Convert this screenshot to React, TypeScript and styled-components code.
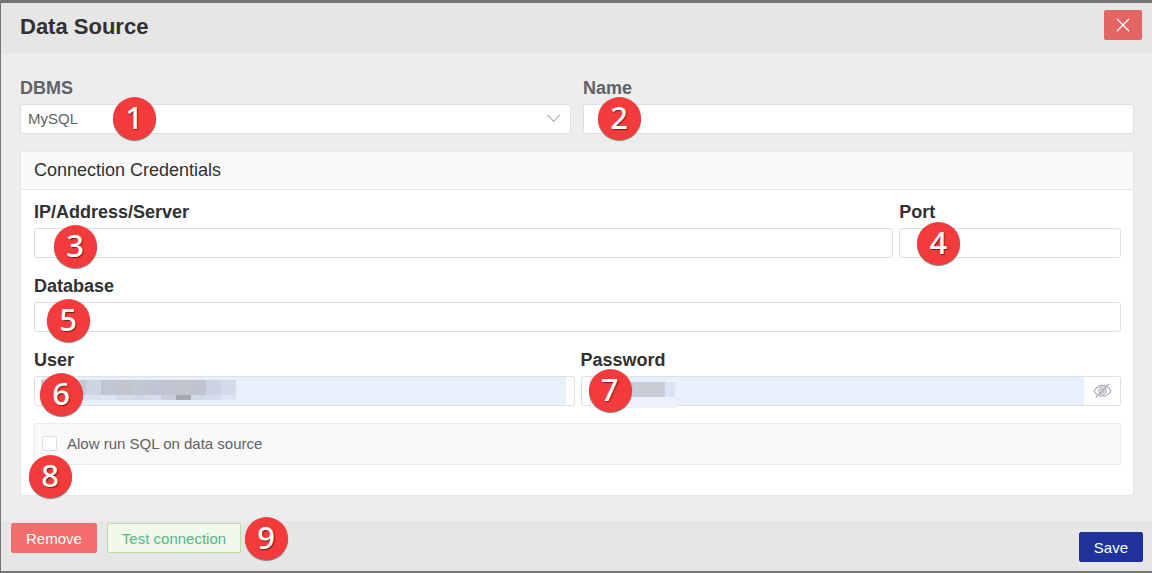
import React from 'react';
import styled, { createGlobalStyle } from 'styled-components';

const GlobalStyle = createGlobalStyle`
  *, *::before, *::after { box-sizing: border-box; }
  body {
    margin: 0;
    background: #ededed;
    color: #303133;
    font-family: "Liberation Sans", Arial, sans-serif;
    font-size: 15px;
  }
  button, input, select { font: inherit; }
`;

const Dialog = styled.form`
  display: flex;
  flex-direction: column;
  min-height: 100vh;
  border: solid #757575;
  border-width: 3px 0 2px 1px;
  background: #ededed;
`;

const Header = styled.header`
  display: flex;
  justify-content: space-between;
  align-items: flex-start;
  height: 50px;
  padding: 7px 10px 0 19px;
  background: #e6e6e6;
`;

const Title = styled.h1`
  margin: 0;
  font-size: 22px;
  line-height: 34px;
`;

const CloseButton = styled.button`
  display: flex;
  align-items: center;
  justify-content: center;
  width: 38px;
  height: 30px;
  padding: 0;
  border: 0;
  border-radius: 2px;
  background: #e46464;
`;

const Body = styled.main`
  flex: 1;
  padding: 23px 18px 25px 19px;
`;

const Row = styled.div<{ $columns?: string; $gap?: number }>`
  display: grid;
  grid-template-columns: ${(p) => p.$columns ?? '1fr'};
  column-gap: ${(p) => p.$gap ?? 6}px;
`;

const Field = styled.div`
  position: relative;
  display: flex;
  flex-direction: column;
  gap: 4px;
  min-width: 0;
`;

const Label = styled.label<{ $muted?: boolean }>`
  font-size: 18px;
  font-weight: bold;
  line-height: 24px;
  color: ${(p) => (p.$muted ? '#606266' : '#303133')};
`;

const Control = styled.div`
  position: relative;
  display: flex;
  align-items: center;
  height: 30px;
  padding: 0 8px 0 7px;
  border: 1px solid #dcdfe6;
  border-radius: 3px;
  background: #fff;
`;

const TextInput = styled.input<{ $filled?: boolean }>`
  flex: 1;
  min-width: 0;
  height: 28px;
  padding: 0;
  border: 0;
  outline: 0;
  color: #606266;
  background: ${(p) => (p.$filled ? '#e8f0fe' : 'transparent')};
`;

const Select = styled.select`
  flex: 1;
  height: 28px;
  padding: 0 0 2px;
  border: 0;
  outline: 0;
  appearance: none;
  color: #606266;
  background: transparent;
`;

const EyeButton = styled.button`
  display: flex;
  align-items: center;
  justify-content: center;
  width: 36px;
  height: 28px;
  margin-right: -8px;
  padding: 0;
  border: 0;
  background: transparent;
`;

const Card = styled.section`
  margin-top: 17px;
  border: 1px solid #e4e7ed;
  border-radius: 4px;
  background: #fff;
`;

const CardTitle = styled.h2`
  margin: 0;
  padding: 0 13px;
  border-bottom: 1px solid #e4e7ed;
  border-radius: 3px 3px 0 0;
  background: #fafafa;
  font-size: 18px;
  font-weight: normal;
  line-height: 37px;
`;

const CardBody = styled.div`
  padding: 10px 12px 30px 13px;
`;

const Fields = styled.div`
  display: grid;
  gap: 16px;
`;

const Option = styled.div`
  position: relative;
  display: flex;
  align-items: center;
  gap: 10px;
  height: 42px;
  margin-top: 17px;
  padding: 0 7px 1px;
  border: 1px solid #ebebeb;
  background: #f9f9f9;
  color: #606266;
`;

const Checkbox = styled.input`
  width: 15px;
  height: 15px;
  margin: 0;
  appearance: none;
  border: 1px solid #dcdfe6;
  border-radius: 2px;
  background: #fff;
`;

const Footer = styled.footer`
  display: flex;
  justify-content: space-between;
  height: 50px;
  padding: 2px 9px 9px 10px;
  background: #e6e6e6;
`;

const Actions = styled.div`
  position: relative;
  display: flex;
  align-items: flex-start;
  gap: 10px;
`;

const tones = {
  danger: { bg: '#f56c6c', border: '#f56c6c', text: '#fff' },
  success: { bg: '#f0f9eb', border: '#b3e19d', text: '#5bb58c' },
  primary: { bg: '#20339c', border: '#20339c', text: '#fff' },
};

const Button = styled.button<{ $tone: keyof typeof tones }>`
  height: 30px;
  padding: 2px 14px 0;
  border: 1px solid ${(p) => tones[p.$tone].border};
  border-radius: 2px;
  background: ${(p) => tones[p.$tone].bg};
  color: ${(p) => tones[p.$tone].text};
  line-height: 26px;
`;

const SaveButton = styled(Button)`
  align-self: flex-end;
`;

const Marker = styled.span<{ $left: number; $top: number }>`
  position: absolute;
  z-index: 2;
  left: ${(p) => p.$left}px;
  top: ${(p) => p.$top}px;
  width: 43px;
  height: 43px;
  padding-right: 1px;
  border-radius: 50%;
  background: #f33b3b;
  box-shadow: 0 1px 1px #777;
  color: #fff;
  font: 500 31px/40px "Noto Sans", "Open Sans", sans-serif;
  text-align: center;
  text-shadow: 1px 1px 1px #7a1c1c;
  pointer-events: none;
`;

const Redaction = styled.div<{ $left: number; $top: number }>`
  position: absolute;
  left: ${(p) => p.$left}px;
  top: ${(p) => p.$top}px;
  z-index: 1;
`;

const Strip = styled.div<{ $height: number }>`
  display: flex;
  height: ${(p) => p.$height}px;
`;

const Block = styled.i<{ $color: string; $width?: number }>`
  width: ${(p) => p.$width ?? 15}px;
  background: ${(p) => p.$color};
`;

const userTop = ['#c3cad6', '#c3cad6', '#c3cad6', '#cfd4e3', '#c0c6d4', '#c3c5cd', '#bfc8d3', '#c0c5d5', '#c1c3d2', '#c1c4ca', '#bfc3d0', '#cdd3e4', '#d5daea'];
const userBottom = ['#dce3f2', '#dce3f2', '#dce3f2', '#dce2f1', '#dde4f4', '#d6dbe9', '#d0dae7', '#d5dceb', '#c9cdda', '#a4a8b2', '#d0d8e6', '#d7dceb', '#dfe7f7'];

const TwoColumns = '1fr 1fr';

export default function App() {
  return (
    <>
      <GlobalStyle />
      <Dialog onSubmit={(e) => e.preventDefault()}>
        <Header>
          <Title>Data Source</Title>
          <CloseButton type="button" aria-label="Close">
            <svg width="14" height="14" viewBox="0 0 14 14" fill="none" stroke="#fff" strokeWidth="1.3" strokeLinecap="round">
              <path d="M1.3 1.3 12.7 12.7M12.7 1.3 1.3 12.7" />
            </svg>
          </CloseButton>
        </Header>

        <Body>
          <Row $columns={TwoColumns} $gap={12}>
            <Field>
              <Label $muted htmlFor="dbms">DBMS</Label>
              <Control>
                <Select id="dbms" defaultValue="MySQL">
                  <option>MySQL</option>
                </Select>
                <svg width="16" height="10" viewBox="0 0 16 10" fill="none" stroke="#b4b8bf" strokeWidth="1.3" strokeLinecap="round" strokeLinejoin="round">
                  <path d="M1.6 1.2 7.6 7.4 13.6 1.2" />
                </svg>
              </Control>
              <Marker $left={93} $top={21}>1</Marker>
            </Field>
            <Field>
              <Label $muted htmlFor="name">Name</Label>
              <Control><TextInput id="name" /></Control>
              <Marker $left={15} $top={21}>2</Marker>
            </Field>
          </Row>

          <Card>
            <CardTitle>Connection Credentials</CardTitle>
            <CardBody>
              <Fields>
                <Row $columns="31fr 8fr">
                  <Field>
                    <Label htmlFor="server">IP/Address/Server</Label>
                    <Control><TextInput id="server" /></Control>
                    <Marker $left={20} $top={25}>3</Marker>
                  </Field>
                  <Field>
                    <Label htmlFor="port">Port</Label>
                    <Control><TextInput id="port" /></Control>
                    <Marker $left={18} $top={22}>4</Marker>
                  </Field>
                </Row>
                <Row>
                  <Field>
                    <Label htmlFor="database">Database</Label>
                    <Control><TextInput id="database" /></Control>
                    <Marker $left={13} $top={25}>5</Marker>
                  </Field>
                </Row>
                <Row $columns={TwoColumns}>
                  <Field>
                    <Label htmlFor="user">User</Label>
                    <Control>
                      <TextInput id="user" $filled />
                      <Redaction $left={6} $top={3}>
                        <Strip $height={15}>
                          {userTop.map((c, i) => <Block key={i} $color={c} />)}
                        </Strip>
                        <Strip $height={5}>
                          {userBottom.map((c, i) => <Block key={i} $color={c} />)}
                        </Strip>
                      </Redaction>
                    </Control>
                    <Marker $left={6} $top={25}>6</Marker>
                  </Field>
                  <Field>
                    <Label htmlFor="password">Password</Label>
                    <Control>
                      <TextInput id="password" type="password" $filled />
                      <EyeButton type="button" aria-label="Show password">
                        <svg width="20" height="16" viewBox="0 0 20 16" fill="none" stroke="#a9adb5" strokeWidth="1.2" strokeLinecap="round">
                          <path d="M2 8C4.5 4 7 2.3 10.5 2.3S16.5 4 19 8C16.5 12 13.5 13.2 10.5 13.2S4.5 12 2 8Z" />
                          <circle cx="10.5" cy="7.7" r="3.7" />
                          <circle cx="10.5" cy="7.7" r="1.6" />
                          <path d="M4 14.3 16.8 1.2" />
                        </svg>
                      </EyeButton>
                      <Redaction $left={8} $top={5}>
                        <Strip $height={15}>
                          <Block $color="#c8cdd8" $width={75} />
                          <Block $color="#dae4f6" $width={10} />
                        </Strip>
                        <Strip $height={11}>
                          <Block $color="#edf2fe" $width={85} />
                        </Strip>
                      </Redaction>
                    </Control>
                    <Marker $left={8} $top={21}>7</Marker>
                  </Field>
                </Row>
              </Fields>
              <Option>
                <Checkbox id="allow-sql" type="checkbox" />
                <label htmlFor="allow-sql">Alow run SQL on data source</label>
                <Marker $left={-6} $top={31}>8</Marker>
              </Option>
            </CardBody>
          </Card>
        </Body>

        <Footer>
          <Actions>
            <Button type="button" $tone="danger">Remove</Button>
            <Button type="button" $tone="success">Test connection</Button>
            <Marker $left={234} $top={-6}>9</Marker>
          </Actions>
          <SaveButton type="submit" $tone="primary">Save</SaveButton>
        </Footer>
      </Dialog>
    </>
  );
}
